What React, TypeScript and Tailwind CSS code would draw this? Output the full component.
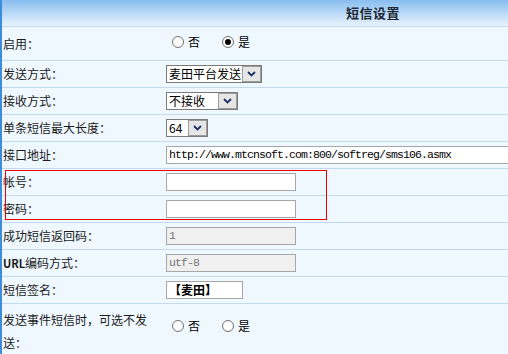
import React from 'react'

const Chevron = () => (
    <svg width="9" height="6" viewBox="0 0 9 6">
        <path d="M1 1 L4.5 4.5 L8 1" fill="none" stroke="#1b2f6b" strokeWidth="1.8" />
    </svg>
)

const Select = ({ text, width }: any) => {
    return (
        <div className={`flex h-[18px] border border-[#7a7a7a] bg-white ${width}`}>
            <span className="flex-1 pl-[2px] leading-[16px] text-[12px] text-black whitespace-nowrap overflow-hidden">{text}</span>
            <span className="w-[19px] h-[16px] flex items-center justify-center bg-[#e6e6e6] border border-[#9c9c9c]">
                <Chevron />
            </span>
        </div>
    )
}

const Radio = ({ label, checked }: any) => {
    return (
        <div className="flex items-center">
            <span className="w-[12px] h-[12px] rounded-full border border-[#6f6f6f] bg-white flex items-center justify-center">
                {checked && <span className="w-[6px] h-[6px] rounded-full bg-black" />}
            </span>
            <span className="ml-[4px] text-[12px] leading-[14px] text-black">{label}</span>
        </div>
    )
}

const Radios = ({ selected }: any) => {
    return (
        <div className="flex items-center pl-[6px] gap-[22px]">
            <Radio label="否" checked={selected === 'no'} />
            <Radio label="是" checked={selected === 'yes'} />
        </div>
    )
}

const TextInput = ({ value, width, disabled, mono }: any) => {
    return (
        <div
            className={`h-[18px] border border-[#a6a6a6] px-[2px] leading-[16px] whitespace-nowrap overflow-hidden ${width} ${disabled ? 'bg-[#f0f0f0] text-[#777]' : 'bg-white text-black'} ${mono ? "font-['Liberation_Mono',monospace] text-[11.5px] tracking-[-0.9px]" : 'text-[12px] font-bold'}`}>
            {value}
        </div>
    )
}

const Row = ({ label, children, tall }: any) => {
    return (
        <div className={`flex items-center border-t border-[#c3daee] ${tall ? 'h-[34px]' : 'h-[27px]'}`}>
            <div className="w-[164px] pl-[1px] text-[12px] text-[#1a1a1a] whitespace-nowrap">{label}</div>
            <div className="flex-1">{children}</div>
        </div>
    )
}

export default function App() {
    return (
        <div className="relative w-[508px] h-[354px] overflow-hidden bg-[#eff7ff] font-['Noto_Sans_CJK_SC','Noto_Sans',sans-serif]">
            <div className="w-[744px] h-full border-l-2 border-[#3d8ddc]">
                <div className="h-[26px] bg-gradient-to-b from-[#88bdf0] to-[#e9f3fc] flex items-center justify-center">
                    <span className="text-[13px] font-bold text-[#1c2733] tracking-[0.5px]">短信设置</span>
                </div>
                <Row label="启用：" tall>
                    <div className="-mt-[4px]"><Radios selected="yes" /></div>
                </Row>
                <Row label="发送方式：">
                    <Select text="麦田平台发送" width="w-[96px]" />
                </Row>
                <Row label="接收方式：">
                    <Select text="不接收" width="w-[72px]" />
                </Row>
                <Row label="单条短信最大长度：">
                    <Select text="64" width="w-[42px]" />
                </Row>
                <Row label="接口地址：">
                    <TextInput value="http://www.mtcnsoft.com:800/softreg/sms106.asmx" width="w-[400px]" mono />
                </Row>
                <Row label="帐号：">
                    <TextInput value="" width="w-[130px]" />
                </Row>
                <Row label="密码：">
                    <TextInput value="" width="w-[130px]" />
                </Row>
                <Row label="成功短信返回码：">
                    <TextInput value="1" width="w-[130px]" disabled mono />
                </Row>
                <Row label={<span><span className="font-bold text-[11px]">URL</span>编码方式：</span>}>
                    <TextInput value="utf-8" width="w-[130px]" disabled mono />
                </Row>
                <Row label="短信签名：">
                    <TextInput value="【麦田】" width="w-[77px]" />
                </Row>
                <div className="flex items-start border-t border-[#c3daee] h-[60px]">
                    <div className="w-[164px] pl-[1px] pt-[4px] text-[12px] leading-[23px] text-[#1a1a1a]">
                        发送事件短信时，可选不发送：
                    </div>
                    <div className="pt-[15px]">
                        <Radios selected="none" />
                    </div>
                </div>
            </div>
            <div className="absolute left-[5px] top-[170px] w-[322px] h-[50px] border border-[#ee0000]" />
        </div>
    )
}
